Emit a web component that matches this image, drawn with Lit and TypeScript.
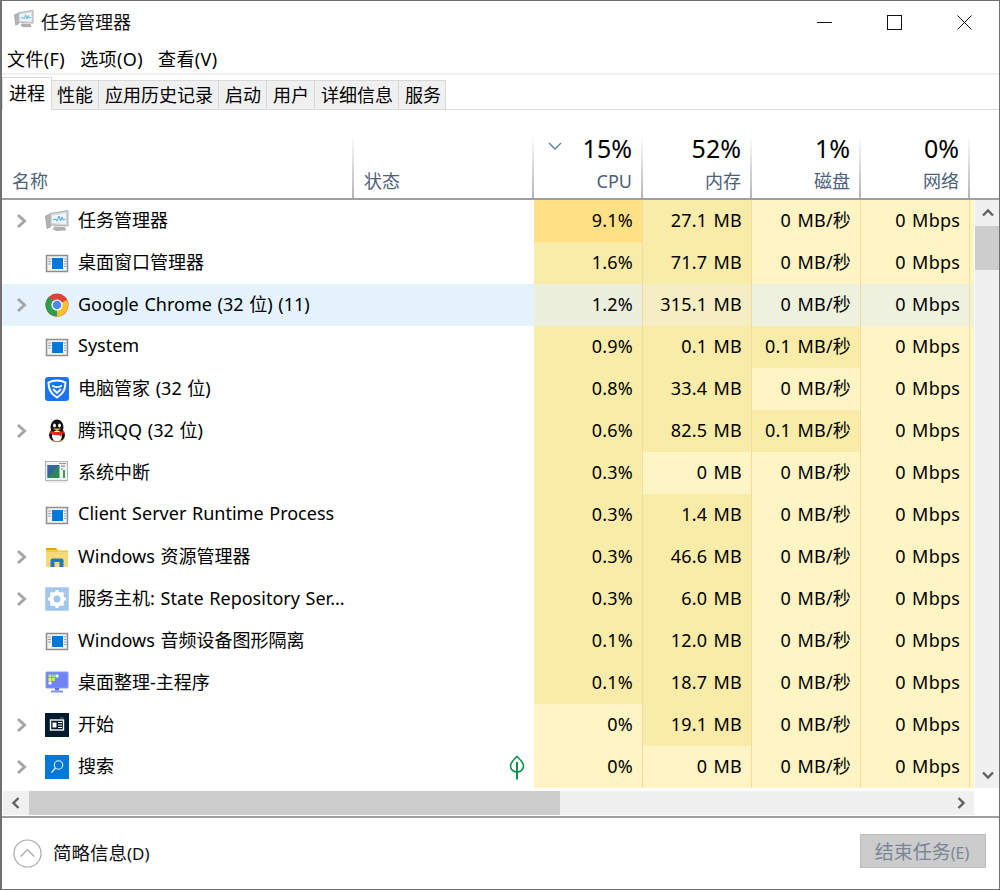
import { LitElement, html, css, svg } from "lit";
import { customElement } from "lit/decorators.js";

const generic = svg`<rect x="1.500" y="4.500" width="21" height="16" fill="#f4f4f4" stroke="#8e8e8e" stroke-width="1.500"/><rect x="7" y="7" width="11" height="11" fill="#0078d7"/><path d="M3 8h3M3 10.500h3M3 13h3M19 8h2.500M19 10.500h2.500M19 13h2.500M19 15.500h2.500" stroke="#98a2ad" stroke-width="1"/>`;

const icons: Record<string, unknown> = {
  taskmgr: svg`<path d="M.5 7l5-2v13l-3.500 1.500z" fill="#b4b4b4" stroke="#8f8f8f" stroke-width=".6"/><path d="M5 4.500L23 1.500V17L5 16z" fill="#d5d8db" stroke="#a0a0a0" stroke-width=".8"/><path d="M7 6.500l14-2.500v11L7 14z" fill="#eef6fd"/><path d="M8 11l2.500-1 1.500 2 2-5 1.500 5 1.500-4 1 3 2.500-1" fill="none" stroke="#4fa6e3" stroke-width="1"/><path d="M9 17.500l11 .5 1 3.500-9.500.5-3.500-1.500z" fill="#b0b0b0"/>`,
  generic,
  chrome: svg`<circle cx="12" cy="12" r="11.500" fill="#e0433a"/><path d="M12 12l10-5a11.500 11.500 0 0 1 -10 16.500z" fill="#fbc02d"/><path d="M12 12L2.100 17.800A11.500 11.500 0 0 0 12 23.500zM12 12L2.100 17.800A11.500 11.500 0 0 1 3.800 3.900z" fill="#2f9e4c"/><circle cx="12" cy="12" r="5.600" fill="#fff"/><circle cx="12" cy="12" r="4.300" fill="#4d8af0"/>`,
  guard: svg`<rect x="0" y="0" width="24" height="24" rx="3" fill="#1a73f0"/><path d="M12 3.500c3.200 0 6.500.9 8.500 2.200 0 7.300-3.300 11.800-8.500 14.800C6.800 17.500 3.500 13 3.500 5.700c2-1.300 5.300-2.200 8.500-2.200z" fill="none" stroke="#fff" stroke-width="2"/><path d="M7 8.500c3 2 7 2 10 0M8 12l4 4 4-4" fill="none" stroke="#fff" stroke-width="1.800"/>`,
  qq: svg`<ellipse cx="12" cy="8" rx="6.500" ry="7.500" fill="#111"/><ellipse cx="12" cy="16" rx="8" ry="7" fill="#111"/><ellipse cx="12" cy="17" rx="5" ry="5.500" fill="#fff"/><ellipse cx="9.500" cy="6.500" rx="1.400" ry="2" fill="#fff"/><ellipse cx="14.500" cy="6.500" rx="1.400" ry="2" fill="#fff"/><path d="M8 9.500h8l-4 2.500z" fill="#f5b81e"/><path d="M5 11.500c4 2 10 2 14 0l.5 2.500-3 1v3l-2.500-2c-3 .5-6 0-9-1.500z" fill="#e3271f"/><path d="M6 22.500c1-1.500 3-1.500 4 0zM14 22.500c1-1.500 3-1.500 4 0z" fill="#f5a81e"/>`,
  sysint: svg`<rect x=".5" y=".5" width="22" height="19" fill="#f2f2f2" stroke="#b5b5b5"/><rect x="2.500" y="4" width="12" height="13" fill="#2f8a5b"/><path d="M2.500 4h12L2.500 17z" fill="#37659c"/><path d="M16 5h4M16 8h2" stroke="#777" stroke-width="1.200"/><path d="M18 9h2v8h-2z" fill="#3c9a57"/><path d="M14 2.500h7" stroke="#999"/><path d="M1 21h21" stroke="#ddd"/>`,
  folder: svg`<path d="M1 3h10l2 2.500H1z" fill="#e2a30f"/><path d="M1 5.500h22V22H1z" fill="#fbd977"/><path d="M1 5.500h22v1.500H1z" fill="#f6c64e"/><path d="M5.500 22v-6.500c0-1.200 1-2 2-2h9c1 0 2 .8 2 2V22h-4v-5h-5v5z" fill="#2277c3"/>`,
  gear: svg`<rect x=".5" y=".5" width="23" height="23" fill="#a0c6ee" stroke="#bcd5ee"/><g transform="translate(12 12)"><circle r="5.500" fill="none" stroke="#fff" stroke-width="4"/><path d="M-1.500-9h3v3.500h-3zM-1.500 5.500h3V9h-3zM-9-1.500h3.500v3H-9zM5.500-1.500H9v3H5.500z" fill="#fff"/><g transform="rotate(45)"><path d="M-1.500-9h3v3.500h-3zM-1.500 5.500h3V9h-3zM-9-1.500h3.500v3H-9zM5.500-1.500H9v3H5.500z" fill="#fff"/></g></g>`,
  monitor: svg`<rect x="1" y="1" width="22" height="16" rx=".5" fill="#6f84f5" stroke="#8d9cf8"/><rect x="3.500" y="3.500" width="3" height="3" fill="#c4e85e"/><rect x="7" y="3.500" width="3" height="3" fill="#7fe0a0"/><rect x="10.500" y="3.500" width="3" height="3" fill="#dff"/><rect x="3.500" y="7" width="3" height="3" fill="#f6e86a"/><rect x="7" y="7" width="3" height="3" fill="#c4e85e"/><rect x="3.500" y="10.500" width="3" height="3" fill="#fff"/><path d="M10 17h4v2.500h-4z" fill="#5a6fe0"/><rect x="6" y="19.500" width="12" height="2" fill="#8191f0"/>`,
  start: svg`<rect width="24" height="24" fill="#001a2e"/><rect x="5.500" y="7" width="13" height="10" fill="none" stroke="#fff" stroke-width="1.400"/><rect x="7.500" y="9.500" width="4" height="5" fill="#fff"/><path d="M13 9.500h4M13 12h4M13 14.500h4" stroke="#fff" stroke-width="1.200"/><path d="M15 5h3.500" stroke="#6d7d8c"/>`,
  search: svg`<rect width="24" height="24" fill="#0078d7"/><circle cx="13.500" cy="10" r="4.200" fill="none" stroke="#e9f3fb" stroke-width="1.100"/><path d="M10.500 13L6.500 17.500" stroke="#e9f3fb" stroke-width="1.200"/>`,
};

type Row = { n: string; i: string; e?: boolean; v: string[]; h: number[]; hi?: boolean; leaf?: boolean };
const rows: Row[] = [
  { n: "任务管理器", i: "taskmgr", e: true, v: ["9.1%", "27.1 MB", "0 MB/秒", "0 Mbps"], h: [2, 1, 0, 0] },
  { n: "桌面窗口管理器", i: "generic", v: ["1.6%", "71.7 MB", "0 MB/秒", "0 Mbps"], h: [1, 1, 0, 0] },
  { n: "Google Chrome (32 位) (11)", i: "chrome", e: true, hi: true, v: ["1.2%", "315.1 MB", "0 MB/秒", "0 Mbps"], h: [1, 1, 0, 0] },
  { n: "System", i: "generic", v: ["0.9%", "0.1 MB", "0.1 MB/秒", "0 Mbps"], h: [1, 1, 1, 0] },
  { n: "电脑管家 (32 位)", i: "guard", v: ["0.8%", "33.4 MB", "0 MB/秒", "0 Mbps"], h: [1, 1, 0, 0] },
  { n: "腾讯QQ (32 位)", i: "qq", e: true, v: ["0.6%", "82.5 MB", "0.1 MB/秒", "0 Mbps"], h: [1, 1, 1, 0] },
  { n: "系统中断", i: "sysint", v: ["0.3%", "0 MB", "0 MB/秒", "0 Mbps"], h: [1, 0, 0, 0] },
  { n: "Client Server Runtime Process", i: "generic", v: ["0.3%", "1.4 MB", "0 MB/秒", "0 Mbps"], h: [1, 1, 0, 0] },
  { n: "Windows 资源管理器", i: "folder", e: true, v: ["0.3%", "46.6 MB", "0 MB/秒", "0 Mbps"], h: [1, 1, 0, 0] },
  { n: "服务主机: State Repository Ser...", i: "gear", e: true, v: ["0.3%", "6.0 MB", "0 MB/秒", "0 Mbps"], h: [1, 1, 0, 0] },
  { n: "Windows 音频设备图形隔离", i: "generic", v: ["0.1%", "12.0 MB", "0 MB/秒", "0 Mbps"], h: [1, 1, 0, 0] },
  { n: "桌面整理-主程序", i: "monitor", v: ["0.1%", "18.7 MB", "0 MB/秒", "0 Mbps"], h: [1, 1, 0, 0] },
  { n: "开始", i: "start", e: true, v: ["0%", "19.1 MB", "0 MB/秒", "0 Mbps"], h: [0, 1, 0, 0] },
  { n: "搜索", i: "search", e: true, leaf: true, v: ["0%", "0 MB", "0 MB/秒", "0 Mbps"], h: [0, 0, 0, 0] },
];

const heads = [
  { p: "15%", l: "CPU", sort: true },
  { p: "52%", l: "内存" },
  { p: "1%", l: "磁盘" },
  { p: "0%", l: "网络" },
];

@customElement("app-root")
export class AppRoot extends LitElement {
  static styles = css`
    :host {
      display: flex;
      flex-direction: column;
      width: 1000px;
      height: 890px;
      box-sizing: border-box;
      background: #fff;
      border-style: solid;
      border-color: #707070;
      border-width: 1px 1px 1px 2px;
      font-family: "Noto Sans", "Noto Sans CJK SC", sans-serif;
      font-size: 18px;
      color: #000;
      overflow: hidden;
    }
    svg { display: block; }
    .title { height: 36px; display: flex; align-items: center; flex: none; }
    .app-icon { margin-left: 12px; margin-right: 7px; width: 20px; height: 20px; }
    .title-text { flex: 1; color: #111; height: 26px; line-height: 26px; margin-top: 6px; }
    .win-btns { display: flex; align-items: center; margin-top: 7px; padding-right: 27px; gap: 55px; }
    .menu { height: 36px; box-sizing: content-box; display: flex; align-items: center; gap: 15px; padding-left: 5px; flex: none; border-bottom: 2px solid #f0f0f0; letter-spacing: .4px; }
    .menu span { position: relative; top: 3px; }
    .tabs { height: 35px; flex: none; display: flex; align-items: flex-end; border-bottom: 1px solid #d9d9d9; box-sizing: border-box; }
    .tab { height: 29px; line-height: 28px; box-sizing: border-box; background: #f0f0f0; border: 1px solid #d9d9d9; border-left: none; border-bottom: none; padding: 0 5px 0 6px; white-space: nowrap; }
    .tab.active { height: 33px; line-height: 31px; margin-bottom: -1px; background: #fff; border-left: 1px solid #d9d9d9; width: 50px; position: relative; padding: 0 0 2px 6px; }
    .tab.narrow { padding: 0 5px; }
    .tab.last { padding: 0 4px 0 6px; }
    .spacer { height: 25px; flex: none; }
    .head, .row { display: grid; grid-template-columns: 352px 180px 109px 109px 109px 109px 4px; }
    .head { height: 65px; flex: none; border-bottom: 2px solid #a0a0a0; box-sizing: border-box; grid-template-columns: 352px 180px 109px 109px 109px 109px 1fr; }
    .hcell { position: relative; display: flex; flex-direction: column; justify-content: flex-end; color: #4c607a; padding: 0 11px 4px 10px; box-sizing: border-box; background: linear-gradient(#c8c8c8, #c8c8c8) right / 2px 100% no-repeat; }
    .hcell.sep { background-image: linear-gradient(#fff, #b4b4b4); }
    .hcell.blank { background: none; }
    .hcell .lab { height: 26px; line-height: 26px; }
    .hcell.metric { align-items: flex-end; justify-content: space-between; }
    .pct { font-size: 25px; line-height: 26px; color: #000; margin-top: 0; }
    .sort { position: absolute; left: 14px; top: 7px; }
    .body { flex: none; display: flex; height: 588px; }
    .rows { width: 972px; flex: none; }
    .row { height: 42px; box-sizing: border-box; }
    .row.hi .name, .row.hi .status { background: #e5f3ff; }
    .name { display: flex; align-items: center; min-width: 0; }
    .chev { width: 37px; flex: none; display: flex; justify-content: flex-end; padding-right: 12px; box-sizing: border-box; }
    .ico { width: 36px; flex: none; display: flex; justify-content: center; }
    .nm { margin-left: 3px; white-space: nowrap; color: #000; padding-bottom: 4px; word-spacing: 1px; }
    .status { display: flex; justify-content: flex-end; align-items: center; padding-right: 9px; }
    .cell { text-align: right; line-height: 41px; padding-right: 9px; border-right: 1px solid #f1dca0; box-sizing: border-box; color: #000; white-space: nowrap; letter-spacing: .2px; word-spacing: 1.5px; }
    .h0 { background: #fff4c4; }
    .h1 { background: #f9eca8; }
    .h2 { background: #ffe084; }
    .row.hi .h0 { background: #edf1de; }
    .row.hi .h1 { background: #f5eec2; }
    .row.hi .cpu.h1 { background: #ecefdc; }
    .cut { background: #fff4c4; }
    .row.hi .cut { background: #edf1de; }
    .vbar { width: 25px; flex: none; background: #f0f0f0; display: flex; flex-direction: column; align-items: center; margin-left: 1px; }
    .vbtn { height: 26px; width: 100%; flex: none; display: flex; align-items: center; justify-content: center; }
    .vthumb { width: 100%; height: 44px; background: #cdcdcd; flex: none; }
    .vtrack { flex: 1; }
    .hbar { margin-top: 3px; height: 24px; flex: none; width: 971px; background: #f0f0f0; display: flex; align-items: center; margin-left: 1px; }
    .hbtn { width: 26px; height: 100%; flex: none; display: flex; align-items: center; justify-content: center; }
    .hthumb { width: 531px; height: 100%; background: #cdcdcd; flex: none; }
    .htrack { flex: 1; }
    .footer { flex: 1; border-top: 2px solid #a0a0a0; margin-top: 1px; display: flex; align-items: center; padding: 0 13px 1px 11px; }
    .collapse { margin-right: 11px; }
    .ftext { flex: 1; color: #111; font-size: 18.500px; margin-bottom: 3px; }
    .small { font-size: 17px; }
    .endbtn { width: 126px; height: 34px; margin-bottom: 4px; padding-right: 2px; box-sizing: border-box; background: #ccc; border: 1px solid #bdbdbd; color: #7a8696; font-size: 19px; display: flex; align-items: center; justify-content: center; }
    .endbtn .small { font-size: 16px; }
  `;

  private ic(name: string, w = 24, h = 24) {
    return html`<svg width=${w} height=${h} viewBox="0 0 24 24">${icons[name]}</svg>`;
  }

  private chev() {
    return html`<svg width="11" height="16" viewBox="0 0 11 16"><path d="M2 2l6.500 6-6.500 6" fill="none" stroke="#a6a6a6" stroke-width="3"/></svg>`;
  }

  private arrow(d: string) {
    return html`<svg width="12" height="12" viewBox="0 0 12 12"><path d=${d} fill="none" stroke="#606060" stroke-width="2.400"/></svg>`;
  }

  private row(r: Row) {
    const cols = ["cpu", "mem", "disk", "net"];
    return html`<div class="row ${r.hi ? "hi" : ""}">
      <div class="name">
        <div class="chev">${r.e ? this.chev() : ""}</div>
        <div class="ico">${this.ic(r.i)}</div>
        <div class="nm">${r.n}</div>
      </div>
      <div class="status">${r.leaf
        ? html`<svg width="16" height="25" viewBox="0 0 16 25"><path d="M8 1.500C5 4.500 1.500 7 1.500 11c0 3.500 3 6 6.500 6s6.500-2.500 6.500-6C14.500 7 11 4.500 8 1.500z" fill="none" stroke="#0b8f4d" stroke-width="1.600"/><path d="M8 7v17.500" stroke="#0b8f4d" stroke-width="2"/></svg>`
        : ""}</div>
      ${r.v.map((v, i) => html`<div class="cell ${cols[i]} h${r.h[i]}">${v}</div>`)}
      <div class="cut"></div>
    </div>`;
  }

  render() {
    return html`
      <div class="title">
        <svg class="app-icon" viewBox="0 0 24 24">${icons.taskmgr}</svg>
        <div class="title-text">任务管理器</div>
        <div class="win-btns">
          <svg width="15" height="15" viewBox="0 0 15 15"><path d="M0 7.500h15" stroke="#111" stroke-width="1"/></svg>
          <svg width="15" height="15" viewBox="0 0 15 15"><rect x=".500" y=".500" width="14" height="14" fill="none" stroke="#111" stroke-width="1"/></svg>
          <svg width="15" height="15" viewBox="0 0 15 15"><path d="M.5.500l14 14M14.500.500l-14 14" stroke="#111" stroke-width="1"/></svg>
        </div>
      </div>
      <div class="menu">
        <span>文件(F)</span><span>选项(O)</span><span>查看(V)</span>
      </div>
      <div class="tabs">
        <div class="tab active">进程</div>
        <div class="tab narrow">性能</div>
        <div class="tab">应用历史记录</div>
        <div class="tab">启动</div>
        <div class="tab">用户</div>
        <div class="tab">详细信息</div>
        <div class="tab last">服务</div>
      </div>
      <div class="spacer"></div>
      <div class="head">
        <div class="hcell sep"><div class="lab">名称</div></div>
        <div class="hcell sep"><div class="lab">状态</div></div>
        ${heads.map(
          (h) => html`<div class="hcell sep metric">
            ${h.sort
              ? html`<svg class="sort" width="14" height="8" viewBox="0 0 14 8"><path d="M1 1l6 6 6-6" fill="none" stroke="#5f7d9e" stroke-width="1.400"/></svg>`
              : ""}
            <div class="pct">${h.p}</div>
            <div class="lab">${h.l}</div>
          </div>`
        )}
        <div class="hcell blank"></div>
      </div>
      <div class="body">
        <div class="rows">${rows.map((r) => this.row(r))}</div>
        <div class="vbar">
          <div class="vbtn">${this.arrow("M1 8.500l5-5 5 5")}</div>
          <div class="vthumb"></div>
          <div class="vtrack"></div>
          <div class="vbtn">${this.arrow("M1 3.500l5 5 5-5")}</div>
        </div>
      </div>
      <div class="hbar">
        <div class="hbtn">${this.arrow("M8.500 1l-5 5 5 5")}</div>
        <div class="hthumb"></div>
        <div class="htrack"></div>
        <div class="hbtn">${this.arrow("M3.500 1l5 5-5 5")}</div>
      </div>
      <div class="footer">
        <svg class="collapse" width="29" height="29" viewBox="0 0 30 30"><circle cx="15" cy="15" r="14" fill="none" stroke="#a8a8a8" stroke-width="1.200"/><path d="M8 18l7-7 7 7" fill="none" stroke="#a8a8a8" stroke-width="1.400"/></svg>
        <div class="ftext">简略信息<span class="small">(D)</span></div>
        <div class="endbtn"><span>结束任务<span class="small">(E)</span></span></div>
      </div>
    `;
  }
}
